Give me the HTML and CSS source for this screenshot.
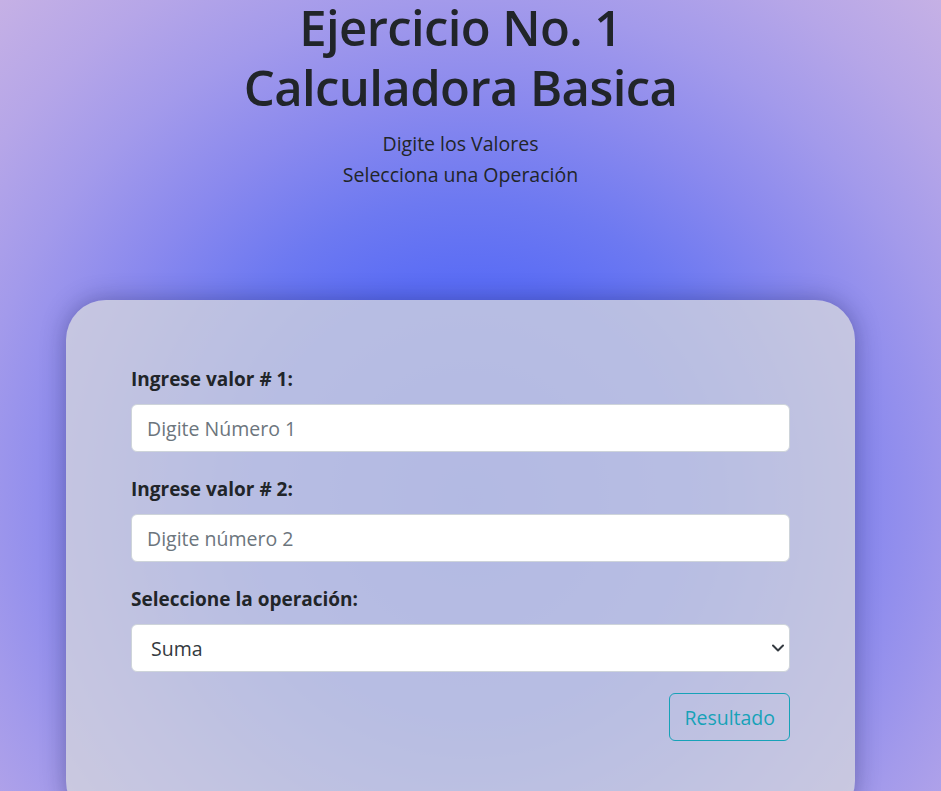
FILE: index.html
```html
<!DOCTYPE html>
<html lang="es">
<head>
<meta charset="utf-8">
<title>Calculadora Basica</title>
<link rel="stylesheet" href="styles.css">
</head>
<body>
<div class="page">
  <header class="intro">
    <h1 class="title">Ejercicio No. 1<br>Calculadora Basica</h1>
    <p class="lead">Digite los Valores<br>Selecciona una Operación</p>
  </header>
  <main class="card">
    <form class="calc">
      <div class="field">
        <label class="label" for="n1">Ingrese valor # 1:</label>
        <input class="control" id="n1" type="text" placeholder="Digite Número 1">
      </div>
      <div class="field">
        <label class="label" for="n2">Ingrese valor # 2:</label>
        <input class="control" id="n2" type="text" placeholder="Digite número 2">
      </div>
      <div class="field field-last">
        <label class="label" for="op">Seleccione la operación:</label>
        <div class="select-wrap">
          <select class="control select" id="op">
            <option>Suma</option>
            <option>Resta</option>
            <option>Multiplicación</option>
            <option>División</option>
          </select>
          <svg class="chevron" width="12" height="8" viewBox="0 0 12 8" aria-hidden="true"><path d="M1 1.5l5 5 5-5" fill="none" stroke="#343a40" stroke-width="2" stroke-linecap="round" stroke-linejoin="round"/></svg>
        </div>
      </div>
      <div class="actions">
        <button class="btn-outline" type="button">Resultado</button>
      </div>
    </form>
  </main>
</div>
</body>
</html>
```
FILE: styles.css
```css
html {
  overflow: hidden;
  background: radial-gradient(circle at 470px 500px,
    #4a5ff8 0px,
    #5b6df5 220px,
    #6d79f1 300px,
    #8a89ee 400px,
    #a39aeb 500px,
    #b6a6e8 590px,
    #c6b1e5 690px);
  min-height: 100%;
}

body {
  margin: 0;
  font-family: "Open Sans", "Noto Sans", sans-serif;
  color: #212529;
}

.page {
  width: 921px;
}

.intro {
  text-align: center;
}

.title {
  margin: -3px 0 11px;
  font-size: 49px;
  line-height: 60px;
  font-weight: 600;
  letter-spacing: -0.6px;
}

.lead {
  margin: 0;
  font-size: 19.5px;
  line-height: 31px;
  font-weight: 400;
}

.card {
  width: 789px;
  box-sizing: border-box;
  margin: 110px auto 0;
  padding: 66px 65px 80px;
  border-radius: 40px;
  background: rgba(216, 217, 220, 0.74);
  box-shadow: 0 0 24px rgba(20, 20, 60, 0.35);
}

.calc {
  display: flex;
  flex-direction: column;
}

.field {
  display: flex;
  flex-direction: column;
  margin-bottom: 24px;
}

.field-last {
  margin-bottom: 21px;
}

.label {
  font-size: 19px;
  line-height: 27px;
  font-weight: 700;
  margin-bottom: 11px;
}

.control {
  box-sizing: border-box;
  height: 48px;
  width: 100%;
  padding: 0 15px;
  border: 1px solid #ced4da;
  border-radius: 6px;
  background: #fff;
  font-family: inherit;
  font-size: 19.5px;
  color: #212529;
  outline: none;
}

.control::placeholder {
  color: #6c757d;
  opacity: 1;
}

.select-wrap {
  position: relative;
}

.select {
  appearance: none;
  -webkit-appearance: none;
  padding-left: 19px;
  color: #343a40;
}

.chevron {
  position: absolute;
  right: 6px;
  top: 20px;
  pointer-events: none;
}

.actions {
  display: flex;
  justify-content: flex-end;
}

.btn-outline {
  box-sizing: border-box;
  height: 48px;
  min-width: 120px;
  padding: 0 14px;
  border: 1px solid #17a2b8;
  border-radius: 6px;
  background: transparent;
  color: #17a2b8;
  font-family: inherit;
  font-size: 19.5px;
}
```
